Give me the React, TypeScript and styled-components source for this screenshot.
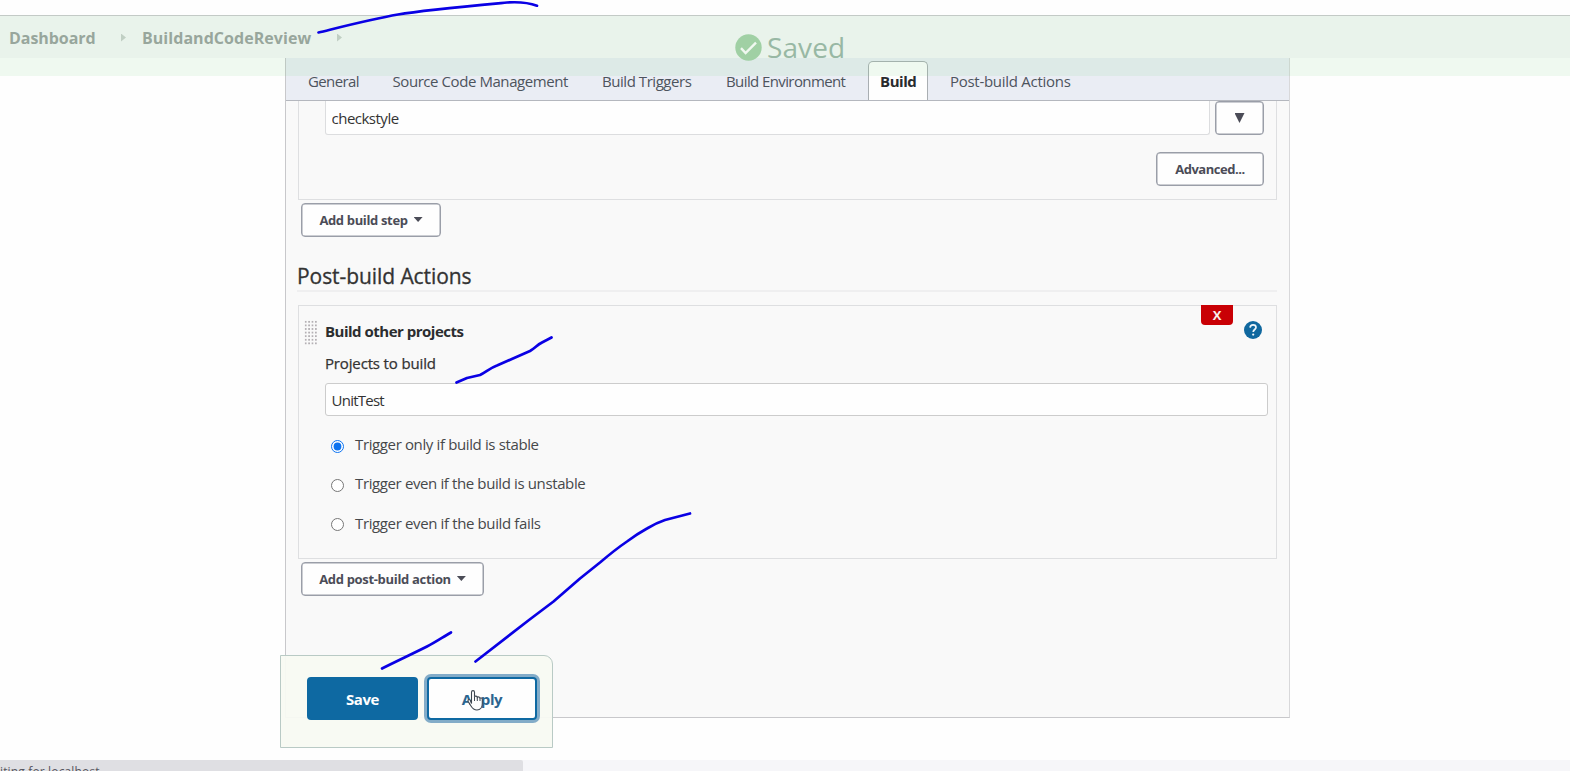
import React from "react";
import styled, { createGlobalStyle, css } from "styled-components";

const Global = createGlobalStyle`
  *, *::before, *::after { box-sizing: border-box; }
  html, body { margin: 0; padding: 0; background: #fefefe; overflow: hidden; }
  body { font-family: "Open Sans", "Noto Sans", sans-serif; font-size: 15px; color: #333; }
  button, input { font-family: inherit; margin: 0; }
`;

const Page = styled.div`
  position: relative;
  display: flex;
  flex-direction: column;
  width: 1570px;
  height: 771px;
  overflow: hidden;
  background: #fefefe;
`;

const Breadcrumbs = styled.nav`
  display: flex;
  align-items: center;
  flex: none;
  height: 43px;
  margin-top: 15px;
  padding: 1px 0 0 9px;
  border-top: 1px solid #c3cac6;
  background: #f8f8f9;
`;

const Crumb = styled.a<{ $w: number; $ls: number }>`
  width: ${(p) => p.$w}px;
  font-size: 16px;
  font-weight: 700;
  line-height: 22px;
  letter-spacing: ${(p) => p.$ls}px;
  white-space: nowrap;
  color: #9ba09f;
`;

const CrumbArrow = styled.i<{ $after: number }>`
  width: 5px;
  height: 8px;
  margin: 0 ${(p) => p.$after}px 0 25px;
  background: #c9cecb;
  clip-path: polygon(0 0, 100% 50%, 0 100%);
`;

const Panel = styled.main`
  display: flex;
  flex-direction: column;
  flex: none;
  width: 1005px;
  height: 660px;
  margin-left: 285px;
  border: 1px solid #c8c8cb;
  border-top: 0;
  border-right-color: #d8d8da;
  background: #f9f9f9;
`;

const TabBar = styled.div`
  display: flex;
  align-items: flex-end;
  flex: none;
  height: 43px;
  padding-left: 7px;
  border-bottom: 1px solid #b4b7be;
  background: #eaedf4;
`;

const Tab = styled.a<{ $w: number; $ls: number; $active?: boolean }>`
  width: ${(p) => p.$w}px;
  height: 39px;
  padding: 9px 0 0 15px;
  font-size: 15px;
  line-height: 22px;
  letter-spacing: ${(p) => p.$ls}px;
  white-space: nowrap;
  color: #4d545d;
  ${(p) =>
    p.$active &&
    css`
      padding-left: 11px;
      padding-top: 8px;
      margin-right: 7px;
      border: 1px solid #a9aeb2;
      border-bottom: 0;
      border-radius: 5px 5px 0 0;
      background: #fefefe;
      font-weight: 700;
      color: #292b2e;
    `}
`;

const StepGroup = styled.section`
  display: flex;
  flex-direction: column;
  align-items: flex-end;
  flex: none;
  height: 99px;
  margin: 0 12px;
  padding-right: 12px;
  border: 1px solid #dedfe1;
  border-top: 0;
`;

const GoalRow = styled.div`
  display: flex;
  align-self: stretch;
  justify-content: space-between;
  padding-left: 26px;
`;

const TextField = styled.input<{ $w: number; $h: number; $ls: number; $cut?: boolean }>`
  width: ${(p) => p.$w}px;
  height: ${(p) => p.$h}px;
  padding: 0 5.5px;
  border: 1px solid #ccc;
  border-radius: 3px;
  outline: 0;
  background: #fefefe;
  font-size: 15px;
  letter-spacing: ${(p) => p.$ls}px;
  color: #333;
  ${(p) =>
    p.$cut &&
    css`
      border-top: 0;
      border-radius: 0 0 3px 3px;
      border-color: #dcdddf;
    `}
`;

const Button = styled.button<{ $w: number; $ls?: number }>`
  display: flex;
  align-items: center;
  justify-content: center;
  flex: none;
  gap: 6px;
  width: ${(p) => p.$w}px;
  height: 34px;
  padding: 0;
  border: 1.5px solid #9a9ea8;
  box-shadow: inset 0 0 0 0.5px #9a9ea8;
  border-radius: 4px;
  background: #fefefe;
  font-size: 13px;
  font-weight: 700;
  letter-spacing: ${(p) => p.$ls ?? 0}px;
  white-space: nowrap;
  color: #4b4c57;
`;

const AdvancedButton = styled(Button)`
  margin-top: 17px;
`;

const AddButton = styled(Button)<{ $top: number }>`
  margin: ${(p) => p.$top}px 0 0 15px;
`;

const Caret = styled.i`
  width: 9px;
  height: 5px;
  margin-bottom: 1px;
  background: #4b4c57;
  clip-path: polygon(0 0, 100% 0, 50% 100%);
`;

const GoalCaret = styled(Caret)`
  width: 10px;
  height: 10px;
  margin: 0;
`;

const SectionTitle = styled.h2`
  height: 30px;
  margin: 25px 12px 0 11px;
  padding-top: 1px;
  border-bottom: 2px solid #efeff0;
  font-size: 21px;
  font-weight: 400;
  line-height: 27px;
  letter-spacing: -0.07px;
  -webkit-text-stroke: 0.3px #333;
  color: #333;
`;

const ActionGroup = styled.section`
  position: relative;
  display: flex;
  flex-direction: column;
  flex: none;
  height: 254px;
  margin: 13px 12px 0;
  padding: 14px 8px 0 26px;
  border: 1px solid #dedfe1;
`;

const DragHandle = styled.div`
  position: absolute;
  left: 5px;
  top: 14px;
  width: 13px;
  height: 26px;
  background-image: radial-gradient(circle, #b4b0b4 0.8px, transparent 1.1px);
  background-size: 3.4px 3.6px;
`;

const DeleteButton = styled.button`
  position: absolute;
  right: 43px;
  top: -1px;
  width: 32px;
  height: 20px;
  padding: 0;
  border: 0;
  border-radius: 0 0 4px 4px;
  background: #c90005;
  font-size: 13px;
  font-weight: 700;
  line-height: 20px;
  color: #fbeeee;
`;

const HelpButton = styled.svg`
  position: absolute;
  right: 14px;
  top: 15px;
  width: 18px;
  height: 18px;
`;

const ActionTitle = styled.h3`
  margin: 0;
  font-size: 15px;
  font-weight: 700;
  line-height: 22px;
  letter-spacing: -0.5px;
  color: #2b2d2f;
`;

const FieldLabel = styled.label`
  margin: 10px 0 9px;
  font-size: 15px;
  line-height: 22px;
  letter-spacing: -0.15px;
  -webkit-text-stroke: 0.25px #333;
  color: #333;
`;

const RadioList = styled.div`
  display: flex;
  flex-direction: column;
  gap: 17.4px;
  padding: 17px 0 0 5.5px;
`;

const RadioRow = styled.label<{ $ls: number }>`
  display: flex;
  align-items: center;
  gap: 11.5px;
  height: 22px;
  font-size: 15px;
  letter-spacing: ${(p) => p.$ls}px;
  color: #46484a;
`;

const Radio = styled.input`
  width: 13px;
  height: 13px;
  margin-top: 4px;
  accent-color: #0b72f0;
`;

const ActionBar = styled.footer`
  position: absolute;
  left: 280px;
  top: 655px;
  display: flex;
  gap: 9px;
  width: 273px;
  height: 93px;
  padding: 21px 0 0 26px;
  border: 1px solid #b9cac5;
  border-radius: 0 9px 0 0;
  background: rgba(248, 250, 242, 0.95);
`;

const MainButton = styled.button<{ $primary?: boolean }>`
  width: ${(p) => (p.$primary ? 111 : 110)}px;
  height: 43px;
  padding: 1px 0 0;
  border: 2px solid #0e69a2;
  border-radius: 4px;
  font-size: 15px;
  font-weight: 700;
  letter-spacing: -0.4px;
  background: ${(p) => (p.$primary ? "#0e69a2" : "#fefefe")};
  color: ${(p) => (p.$primary ? "#fefefe" : "#2b6590")};
  box-shadow: ${(p) => (p.$primary ? "none" : "0 0 0 3px #83acc8")};
`;

const Notice = styled.div`
  position: absolute;
  left: 0;
  top: 16px;
  display: flex;
  align-items: flex-start;
  gap: 5px;
  width: 100%;
  height: 60px;
  padding: 12px 0 0 735px;
  background: rgba(130, 210, 140, 0.12);
  font-size: 28px;
  line-height: 38px;
  letter-spacing: 0.1px;
  color: #98b8a4;
`;

const NoticeIcon = styled.svg`
  width: 27px;
  height: 27px;
  margin-top: 6px;
`;

const Overlay = styled.svg`
  position: absolute;
  inset: 0;
  pointer-events: none;
`;

const StatusBar = styled.div`
  flex: none;
  height: 11px;
  margin-top: 42px;
  background: #f6f6f9;
`;

const StatusText = styled.div`
  width: 523px;
  height: 11px;
  padding-top: 4px;
  overflow: hidden;
  border-top-right-radius: 2px;
  background: #dfdfe3;
  font-size: 12px;
  line-height: 16px;
  letter-spacing: 0.15px;
  white-space: nowrap;
  color: #55555e;
`;

const tabs = [
  { label: "General", w: 84.5, ls: -0.63 },
  { label: "Source Code Management", w: 209.5, ls: -0.43 },
  { label: "Build Triggers", w: 124, ls: -0.45 },
  { label: "Build Environment", w: 157, ls: -0.6 },
  { label: "Build", w: 60, ls: -0.45, active: true },
  { label: "Post-build Actions", w: 150, ls: -0.28 },
];

const triggers = [
  { label: "Trigger only if build is stable", ls: -0.37 },
  { label: "Trigger even if the build is unstable", ls: -0.38 },
  { label: "Trigger even if the build fails", ls: -0.37 },
];

export default function App() {
  return (
    <>
      <Global />
      <Page>
        <Breadcrumbs>
          <Crumb $w={87} $ls={-0.05}>Dashboard</Crumb>
          <CrumbArrow $after={16} />
          <Crumb $w={170} $ls={0.05}>BuildandCodeReview</Crumb>
          <CrumbArrow $after={0} />
        </Breadcrumbs>

        <Panel>
          <TabBar>
            {tabs.map((t) => (
              <Tab key={t.label} $w={t.w} $ls={t.ls} $active={t.active}>
                {t.label}
              </Tab>
            ))}
          </TabBar>

          <StepGroup>
            <GoalRow>
              <TextField $w={885} $h={34} $ls={-0.5} $cut defaultValue="checkstyle" />
              <Button $w={49}>
                <GoalCaret />
              </Button>
            </GoalRow>
            <AdvancedButton $w={108} $ls={-0.45}>Advanced...</AdvancedButton>
          </StepGroup>
          <AddButton $w={140} $top={3} $ls={-0.35}>
            Add build step <Caret />
          </AddButton>

          <SectionTitle>Post-build Actions</SectionTitle>

          <ActionGroup>
            <DragHandle />
            <DeleteButton>X</DeleteButton>
            <HelpButton viewBox="0 0 18 18">
              <circle cx="9" cy="9" r="9" fill="#10689f" />
              <path
                d="M6.1 6.6c.1-1.8 1.3-2.8 3-2.8s2.9 1 2.9 2.5c0 2.1-2.7 2.3-2.8 4.7"
                fill="none"
                stroke="#eef6fa"
                strokeWidth="1.7"
              />
              <circle cx="9.2" cy="13.6" r="1.1" fill="#eef6fa" />
            </HelpButton>
            <ActionTitle>Build other projects</ActionTitle>
            <FieldLabel>Projects to build</FieldLabel>
            <TextField $w={943} $h={33} $ls={-0.75} defaultValue="UnitTest" />
            <RadioList>
              {triggers.map((t, i) => (
                <RadioRow key={t.label} $ls={t.ls}>
                  <Radio type="radio" name="trigger" defaultChecked={i === 0} />
                  {t.label}
                </RadioRow>
              ))}
            </RadioList>
          </ActionGroup>
          <AddButton $w={183} $top={3} $ls={-0.32}>
            Add post-build action <Caret />
          </AddButton>
        </Panel>

        <StatusBar>
          <StatusText>iting for localhost...</StatusText>
        </StatusBar>

        <ActionBar>
          <MainButton $primary>Save</MainButton>
          <MainButton>Apply</MainButton>
        </ActionBar>

        <Notice>
          <NoticeIcon viewBox="0 0 27 27">
            <circle cx="13.5" cy="13.5" r="13.2" fill="#a0d0a4" />
            <path d="M6 14.2l4.6 4.8L21 8.6" fill="none" stroke="#f0f8f0" strokeWidth="2.4" />
          </NoticeIcon>
          Saved
        </Notice>

        <Overlay width="1570" height="771" viewBox="0 0 1570 771">
          <g fill="none" stroke="#0a00e4" strokeWidth="2.7" strokeLinecap="round" strokeLinejoin="round">
            <path d="M318.500 32.500C345 26 372 19 398 14.500S480 5 507 2.500Q525 1.300 537 5.700" />
            <path d="M456.500 382.500L467 378L480 375C486 372 490 368 497 365.500L513 358.500L530 351C535 348 537 345 542 342.500L551.500 337.500" />
            <path d="M382 668.500C397 661 412 654 427 646.500C436 642 443 637 451 632.500" />
            <path d="M475.500 661.500L529 620L553.500 601.500L580 578.500L600 562.500C610 554 616 549 627 541.500Q637 534 647 528.500Q656 523 665 520L690 513.500" />
          </g>
          <path
            d="M471.500 703.500V692.300c0-2.200 3-2.200 3 0v4.500c.5-1 2.600-.9 2.800.6.700-.8 2.500-.6 2.700.8.900-.6 2.300-.1 2.300 1.200v4.200c0 3.500-2 6.400-5.300 6.400-3 0-4.500-1.400-6-4l-2.800-4.500c-.8-1.500.8-2.600 2-1.400z"
            fill="#fefefe"
            stroke="#3d4650"
            strokeWidth="1.1"
          />
          <path d="M474.500 697v4M477.300 697.500v3.500M480 698.500v2.500" stroke="#3d4650" strokeWidth="1" />
        </Overlay>
      </Page>
    </>
  );
}
